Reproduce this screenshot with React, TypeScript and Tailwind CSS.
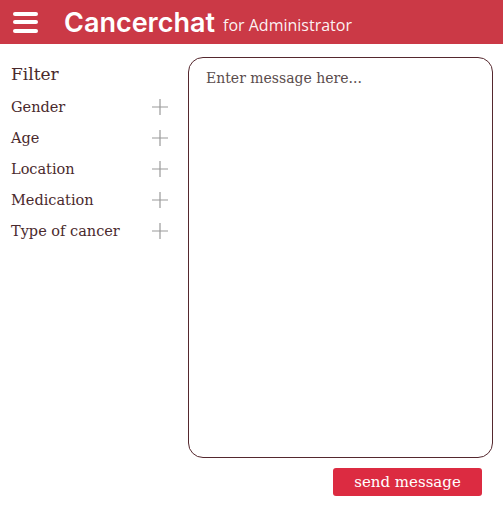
const filters = ['Gender', 'Age', 'Location', 'Medication', 'Type of cancer'];

function PlusIcon() {
  return (
    <svg width="18" height="18" viewBox="0 0 18 18" className="shrink-0 -mt-[2px]">
      <path d="M9 1v16M1 9h16" stroke="#9a9a9a" strokeWidth="1.2" />
    </svg>
  );
}

export default function App() {
  return (
    <div className="w-full h-[507px] bg-white flex flex-col">
      <header className="h-11 bg-[#cb3946] flex items-center shrink-0">
        <div className="ml-[13px] w-[25px] flex flex-col gap-[4.5px]">
          <span className="block h-[4px] rounded-full bg-white" />
          <span className="block h-[4px] rounded-full bg-white" />
          <span className="block h-[4px] rounded-full bg-white" />
        </div>
        <span className="ml-[26px] mt-[2px] text-white text-[27px] font-semibold font-['Inter',sans-serif]">
          Cancerchat
        </span>
        <span className="ml-[8px] mt-[6px] text-white/95 text-[16px] font-['Open_Sans',sans-serif]">
          for Administrator
        </span>
      </header>

      <div className="flex flex-1 pt-[13px] font-['DejaVu_Serif',serif]">
        <aside className="w-[188px] shrink-0 pl-[11px] pr-[19px]">
          <h2 className="text-[17px] text-[#4a2a2d] leading-[34px]">Filter</h2>
          <ul className="mt-[1px]">
            {filters.map((f) => (
              <li key={f} className="h-[31px] flex items-center justify-between text-[14.5px] text-[#4a2a2d]">
                <span>{f}</span>
                <PlusIcon />
              </li>
            ))}
          </ul>
        </aside>

        <main className="flex-1 pr-[10px] flex flex-col">
          <textarea
            className="h-[401px] w-full resize-none rounded-[15px] border-[1.5px] border-[#55282e] pl-[17px] pt-[10px] text-[14px] text-[#4a2a2d] placeholder:text-[#5a4c4c] outline-none"
            placeholder="Enter message here..."
          />
          <button className="mt-[10px] self-end mr-[11px] w-[149px] h-[28px] rounded-[3px] bg-[#dc2b41] text-white text-[15px]">
            send message
          </button>
        </main>
      </div>
    </div>
  );
}
